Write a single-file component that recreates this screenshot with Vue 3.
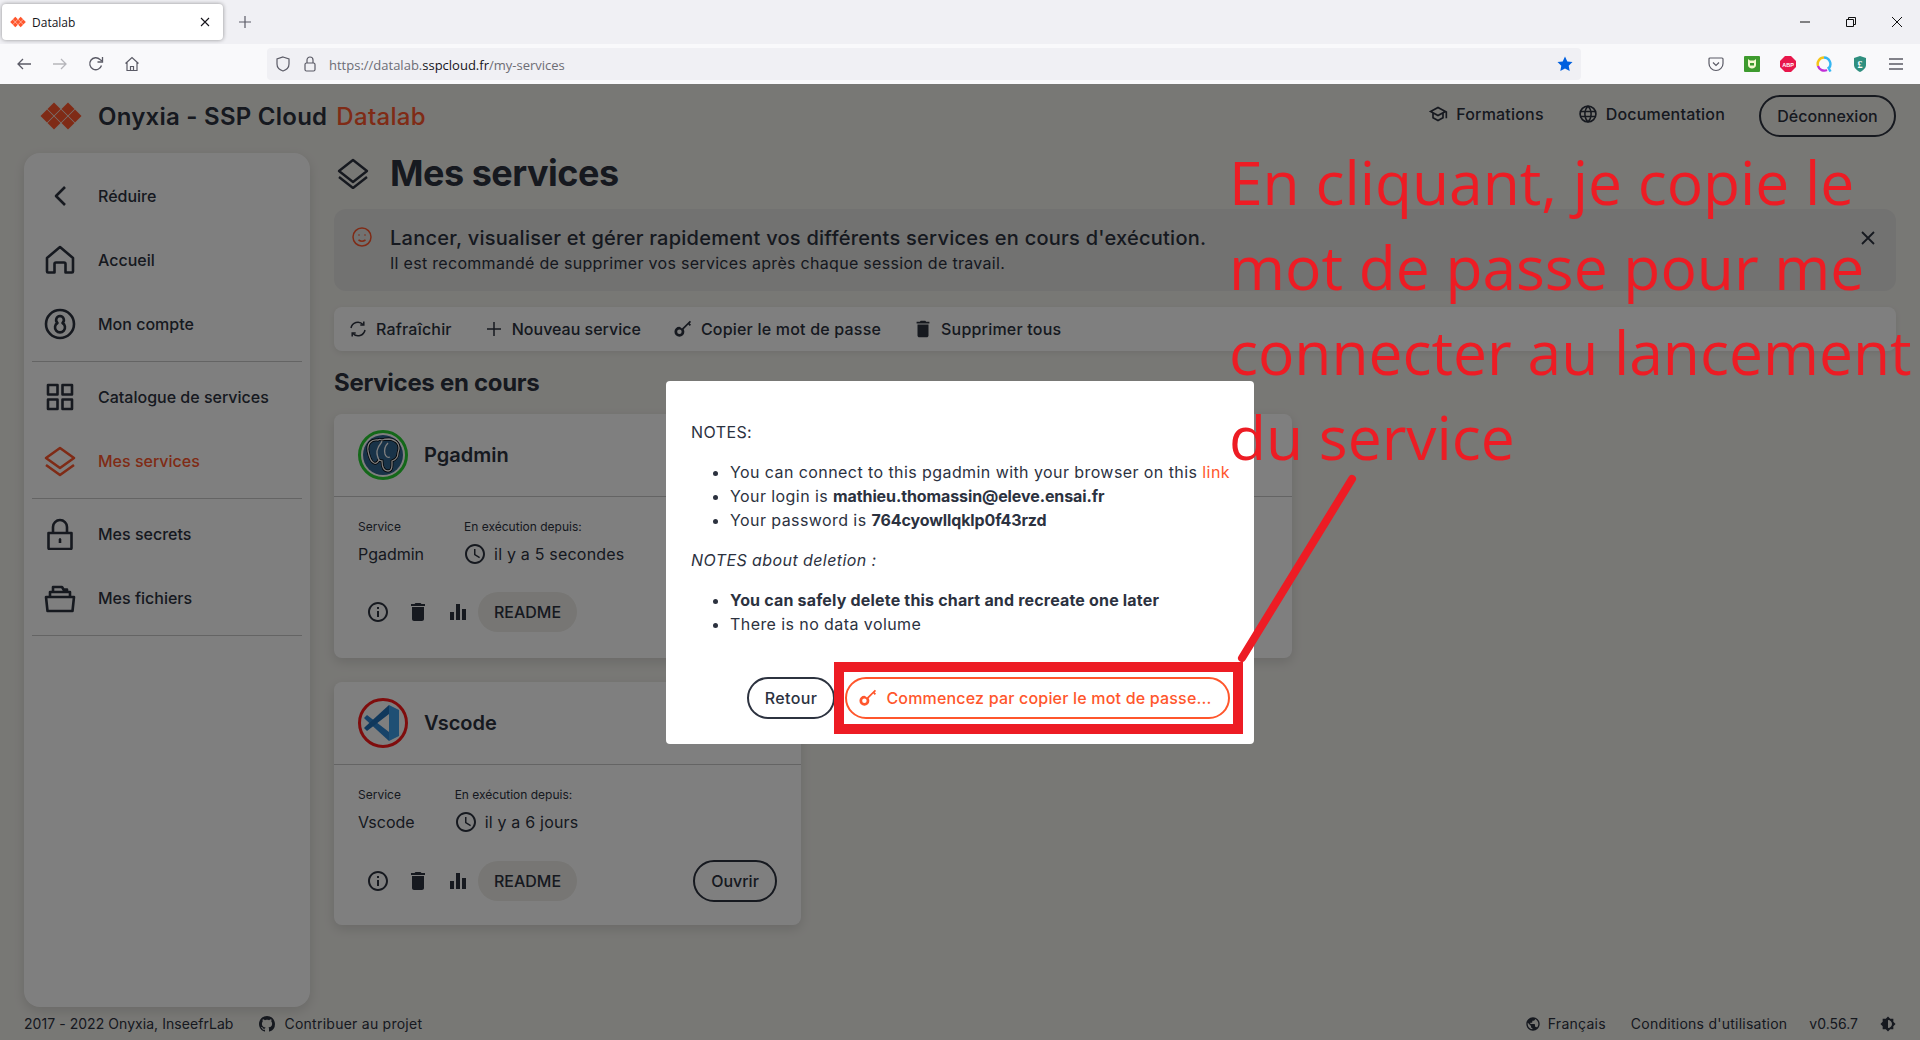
<template>
  <div class="app">
    <!-- Browser chrome -->
    <div class="tabstrip">
      <div class="tab">
        <svg class="logo-small" viewBox="0 0 42 30"><path v-for="(d, i) in logoCells" :key="i" :d="d" fill="#ff562c" /></svg>
        <span class="tab-title">Datalab</span>
        <svg class="tab-close" viewBox="0 0 10 10"><path d="M1 1l8 8M9 1l-8 8" stroke="#15141a" stroke-width="1.1" /></svg>
      </div>
      <svg class="tab-new" viewBox="0 0 12 12"><path d="M6 0v12M0 6h12" stroke="#5b5b66" stroke-width="1.2" /></svg>
      <div class="win-controls">
        <svg viewBox="0 0 10 10"><path d="M0 5h10" stroke="#111" stroke-width="1" /></svg>
        <svg viewBox="0 0 10 10" fill="none"><path d="M.5 2.5h7v7h-7zM2.5 2.5v-2h7v7h-2" stroke="#111" stroke-width="1" /></svg>
        <svg viewBox="0 0 10 10"><path d="M0 0l10 10M10 0L0 10" stroke="#111" stroke-width="1" /></svg>
      </div>
    </div>
    <div class="toolbar">
      <div class="nav-buttons">
        <svg viewBox="0 0 16 16" fill="none" stroke="#5b5b66" stroke-width="1.3"><path d="M15 8H2M7 3L2 8l5 5" /></svg>
        <svg viewBox="0 0 16 16" fill="none" stroke="#b6b6bb" stroke-width="1.3"><path d="M1 8h13M9 3l5 5-5 5" /></svg>
        <svg viewBox="0 0 16 16" fill="none" stroke="#5b5b66" stroke-width="1.3"><path d="M13.5 9.5A6 6 0 1 1 12 3.5L14 5" /><path d="M14.5 1v5h-5" /></svg>
        <svg viewBox="0 0 16 16" fill="none" stroke="#5b5b66" stroke-width="1.2"><path d="M1.5 7.5L8 1.5l6.5 6M3 6.5V14.5h10V6.5M6.5 14.5v-4h3v4" /></svg>
      </div>
      <div class="urlbar">
        <svg class="url-icon" viewBox="0 0 16 16" fill="none" stroke="#5b5b66" stroke-width="1.2"><path d="M8 1l6 2v5c0 3.5-3 6-6 7-3-1-6-3.500-6-7V3z" /></svg>
        <svg class="url-icon" viewBox="0 0 16 16" fill="none" stroke="#5b5b66" stroke-width="1.2"><rect x="3" y="7" width="10" height="8" rx="1.500" /><path d="M5 7V4a3 3 0 0 1 6 0v3" /></svg>
        <span class="url"><span class="url-dim">https://datalab.</span>sspcloud.fr<span class="url-dim">/my-services</span></span>
        <svg class="url-star" viewBox="0 0 16 16"><path d="M8 .5l2.300 4.900 5.200.7-3.800 3.700 1 5.300L8 12.500l-4.700 2.600 1-5.300L.5 6.100l5.200-.7z" fill="#0060df" /></svg>
      </div>
      <div class="extensions">
        <svg viewBox="0 0 16 16" fill="none" stroke="#5b5b66" stroke-width="1.2"><path d="M2 2h12a1 1 0 0 1 1 1v4.500a7 7 0 0 1-14 0V3a1 1 0 0 1 1-1z" /><path d="M5 6.500l3 3 3-3" /></svg>
        <svg viewBox="0 0 16 16"><rect width="16" height="16" rx="1" fill="#3e9b2e" /><path d="M4 3l2 1.500h4L12 3v6c0 2-2 3.500-4 3.500S4 11 4 9z" fill="#f4f8d0" /><path d="M6 7h4v2.500H6z" fill="#3e9b2e" /></svg>
        <svg viewBox="0 0 16 16"><path d="M5 0h6l5 5v6l-5 5H5l-5-5V5z" fill="#e8174b" /><text x="8" y="10.600" class="abp">ABP</text></svg>
        <svg viewBox="0 0 16 16" fill="none" stroke-width="2.400"><path d="M8 1.500a6.500 6.500 0 0 1 5 10.500" stroke="#35b6f2" /><path d="M8 1.500a6.500 6.500 0 0 0-6 8.500" stroke="#f5c518" /><path d="M2 10a6.500 6.500 0 0 0 9 4" stroke="#c12fd6" /><path d="M12 11l2.500 4.500" stroke="#35b6f2" /></svg>
        <svg viewBox="0 0 16 16"><path d="M8 0l6 2v7c0 3-3 5.500-6 7-3-1.500-6-4-6-7V2z" fill="#2f8f7f" /><text x="8" y="11.500" class="shield-letter">£</text></svg>
        <svg viewBox="0 0 16 16" stroke="#5b5b66" stroke-width="1.300"><path d="M1 3h14M1 8h14M1 13h14" /></svg>
      </div>
    </div>

    <!-- Page -->
    <div class="page">
      <header class="header">
        <svg class="logo" viewBox="0 0 42 30"><path v-for="(d, i) in logoCells" :key="i" :d="d" fill="#ff562c" /></svg>
        <span class="brand">Onyxia - SSP Cloud</span>
        <span class="brand-accent">Datalab</span>
        <div class="header-links">
          <a class="header-link">
            <svg viewBox="0 0 24 24"><path fill="currentColor" d="M12 3 1 9l4 2.180v6L12 21l7-3.820v-6l2-1.090V17h2V9L12 3zm6.820 6L12 12.720 5.180 9 12 5.280 18.820 9zM17 15.990l-5 2.730-5-2.730v-3.720L12 15l5-2.730v3.720z" /></svg>
            Formations
          </a>
          <a class="header-link">
            <svg viewBox="0 0 24 24"><circle cx="12" cy="12" r="9.500" fill="none" stroke="currentColor" stroke-width="2" /><path d="M2.500 9h19M2.500 15h19M12 2.500c-5 5-5 14 0 19M12 2.500c5 5 5 14 0 19" fill="none" stroke="currentColor" stroke-width="1.800" /></svg>
            Documentation
          </a>
          <button class="btn-outline logout">Déconnexion</button>
        </div>
      </header>

      <div class="body">
        <nav class="sidebar">
          <template v-for="(group, g) in navGroups" :key="g">
            <div v-for="item in group" :key="item.label" class="nav-item" :class="{ active: item.active }">
              <svg class="nav-icon" viewBox="0 0 32 32" fill="none" stroke="currentColor" stroke-width="2.600" stroke-linejoin="round">
                <path v-for="(d, i) in item.paths" :key="i" :d="d" />
              </svg>
              <span>{{ item.label }}</span>
            </div>
            <div class="nav-divider"></div>
          </template>
        </nav>

        <main class="main">
          <div class="title-row">
            <svg class="title-icon" viewBox="0 0 32 32" fill="none" stroke="currentColor" stroke-width="2.400" stroke-linejoin="round"><path d="M16 3L30 14 16 25 2 14z" /><path d="M2 20l14 11 14-11" /></svg>
            <h1>Mes services</h1>
          </div>

          <div class="banner">
            <svg class="banner-icon" viewBox="0 0 20 20" fill="none" stroke="#ff562c" stroke-width="1.500"><circle cx="10" cy="10" r="9" /><circle cx="7" cy="8" r=".8" fill="#ff562c" stroke="none" /><circle cx="13" cy="8" r=".8" fill="#ff562c" stroke="none" /><path d="M6.500 13c2 1.300 5 1.300 7 0" /></svg>
            <div class="banner-text">
              <div class="banner-title">Lancer, visualiser et gérer rapidement vos différents services en cours d'exécution.</div>
              <div class="banner-sub">Il est recommandé de supprimer vos services après chaque session de travail.</div>
            </div>
            <svg class="banner-close" viewBox="0 0 14 14"><path d="M1 1l12 12M13 1L1 13" stroke="currentColor" stroke-width="1.800" /></svg>
          </div>

          <div class="actions-bar">
            <div class="action">
              <svg viewBox="0 0 18 18" fill="none" stroke="currentColor" stroke-width="1.500"><path d="M2 8a7 7 0 0 1 12-3.500M16 10a7 7 0 0 1-12 3.500" /><path d="M14.800 1.500v3.500h-3.500M3.200 16.500V13h3.500" /></svg>
              Rafraîchir
            </div>
            <div class="action tight">
              <svg viewBox="0 0 18 18"><path d="M9 2v14M2 9h14" stroke="currentColor" stroke-width="1.500" /></svg>
              Nouveau service
            </div>
            <div class="action">
              <svg viewBox="3 2 20 20"><path fill="currentColor" :d="keyPath" /></svg>
              Copier le mot de passe
            </div>
            <div class="action trash">
              <svg viewBox="0 0 24 24"><path fill="currentColor" :d="trashPath" /></svg>
              Supprimer tous
            </div>
          </div>

          <h2 class="section-title">Services en cours</h2>

          <div class="cards">
            <article v-for="s in services" :key="s.name" class="card" :class="s.cls">
              <div class="card-head">
                <div class="card-logo" :class="s.ring">
                  <svg v-if="s.name === 'Pgadmin'" viewBox="0 0 44 44">
                    <circle cx="22" cy="22" r="20" fill="#336791" />
                    <g transform="translate(-3 -3)">
                      <path d="M20 10C13 9 9 14 10 21c1 5 3 11 6 12 2 1 4-1 5-3 1 0 2 1 3 1 0 5 1 10 6 10 3 0 4-3 4-6v-4c3-1 6-4 6-8 3-8-1-13-9-14-3 0-5 0-7 1-2-1-3-1-4 0z" fill="#336791" stroke="#000" stroke-width="2.800" />
                      <path d="M20 10C13 9 9 14 10 21c1 5 3 11 6 12 2 1 4-1 5-3 1 0 2 1 3 1 0 5 1 10 6 10 3 0 4-3 4-6v-4c3-1 6-4 6-8 3-8-1-13-9-14-3 0-5 0-7 1-2-1-3-1-4 0z" fill="none" stroke="#fff" stroke-width="1.300" />
                      <path d="M21 30c-2-4-3-8-1-12 1-3 3-4 4-7M32 27c-2 1-4 0-5-3-1-4 0-8 3-11" fill="none" stroke="#fff" stroke-width="1.300" />
                    </g>
                  </svg>
                  <svg v-else viewBox="3 3 44 44">
                    <path d="M31 43L8 22l-2-2 3-3 22 17z" fill="#2f86d2" />
                    <path d="M31 7L8 28l-2 2 3 3 22-17z" fill="#2070b8" />
                    <path d="M31 7l10 5v26l-10 5z" fill="#3f9fe8" />
                  </svg>
                </div>
                <span class="card-name">{{ s.name }}</span>
              </div>
              <div class="card-body">
                <div class="meta">
                  <div>
                    <div class="meta-label">Service</div>
                    <div class="meta-value">{{ s.name }}</div>
                  </div>
                  <div>
                    <div class="meta-label">En exécution depuis:</div>
                    <div class="meta-value time">
                      <svg viewBox="0 0 24 24"><path fill="currentColor" d="M11.990 2C6.470 2 2 6.480 2 12s4.470 10 9.990 10C17.520 22 22 17.520 22 12S17.520 2 11.990 2zM12 20c-4.420 0-8-3.580-8-8s3.580-8 8-8 8 3.580 8 8-3.580 8-8 8zm.5-13H11v6l5.250 3.150.75-1.230-4.500-2.670z" /></svg>
                      {{ s.since }}
                    </div>
                  </div>
                </div>
                <div class="card-actions">
                  <span class="icon-btn"><svg viewBox="0 0 24 24"><path fill="currentColor" d="M11 7h2v2h-2zm0 4h2v6h-2zm1-9C6.480 2 2 6.480 2 12s4.480 10 10 10 10-4.480 10-10S17.520 2 12 2zm0 18c-4.410 0-8-3.590-8-8s3.590-8 8-8 8 3.590 8 8-3.590 8-8 8z" /></svg></span>
                  <span class="icon-btn"><svg viewBox="0 0 24 24"><path fill="currentColor" :d="trashPath" /></svg></span>
                  <span class="icon-btn"><svg viewBox="0 0 24 24"><path fill="currentColor" d="M10 20h4V4h-4v16zm-6 0h4v-8H4v8zM16 9v11h4V9h-4z" /></svg></span>
                  <span class="chip">README</span>
                  <button v-if="s.cls === 'narrow'" class="btn-outline open">Ouvrir</button>
                </div>
              </div>
            </article>
          </div>
        </main>
      </div>

      <footer class="footer">
        <span class="copyright">2017 - 2022 Onyxia, InseefrLab</span>
        <span class="foot-link contribute">
          <svg viewBox="0 0 16 16"><path fill="currentColor" d="M8 0C3.580 0 0 3.580 0 8c0 3.540 2.290 6.530 5.470 7.590.4.070.55-.17.55-.38 0-.19-.01-.82-.01-1.490-2.010.37-2.530-.49-2.690-.94-.09-.23-.48-.94-.82-1.130-.28-.15-.68-.52-.01-.53.63-.01 1.080.58 1.230.82.72 1.210 1.870.87 2.330.66.070-.52.28-.87.51-1.070-1.780-.2-3.640-.89-3.640-3.950 0-.87.31-1.590.82-2.150-.08-.2-.36-1.020.08-2.120 0 0 .67-.21 2.200.82.64-.18 1.320-.27 2-.27.68 0 1.360.09 2 .27 1.530-1.040 2.200-.82 2.200-.82.44 1.100.16 1.920.08 2.120.51.56.82 1.270.82 2.150 0 3.070-1.870 3.750-3.650 3.950.29.25.54.73.54 1.480 0 1.070-.01 1.930-.01 2.200 0 .21.15.46.55.38A8.013 8.013 0 0 0 16 8c0-4.420-3.580-8-8-8z" /></svg>
          Contribuer au projet
        </span>
        <div class="footer-right">
          <span class="foot-link lang">
            <svg viewBox="0 0 24 24"><path fill="currentColor" d="M12 2C6.480 2 2 6.480 2 12s4.480 10 10 10 10-4.480 10-10S17.520 2 12 2zm-1 17.930c-3.950-.49-7-3.850-7-7.930 0-.62.08-1.210.21-1.790L9 15v1c0 1.100.9 2 2 2v1.930zm6.900-2.540c-.26-.81-1-1.390-1.900-1.390h-1v-3c0-.55-.45-1-1-1H8v-2h2c.55 0 1-.45 1-1V7h2c1.100 0 2-.9 2-2v-.41c2.930 1.190 5 4.060 5 7.410 0 2.080-.8 3.970-2.100 5.390z" /></svg>
            Français
          </span>
          <span>Conditions d'utilisation</span>
          <span class="version">v0.56.7</span>
          <svg class="theme-icon" viewBox="0 0 24 24"><path fill="currentColor" d="M20 8.690V4h-4.690L12 .69 8.690 4H4v4.690L.69 12 4 15.310V20h4.690L12 23.310 15.310 20H20v-4.690L23.310 12 20 8.690zM12 18V6c3.310 0 6 2.690 6 6s-2.690 6-6 6z" /></svg>
        </div>
      </footer>

      <!-- Dialog -->
      <div class="backdrop">
        <div class="dialog">
          <p>NOTES:</p>
          <ul>
            <li>You can connect to this pgadmin with your browser on this <a class="link">link</a></li>
            <li>Your login is <strong>mathieu.thomassin@eleve.ensai.fr</strong></li>
            <li>Your password is <strong>764cyowllqklp0f43rzd</strong></li>
          </ul>
          <p><em>NOTES about deletion :</em></p>
          <ul>
            <li><strong class="spaced">You can safely delete this chart and recreate one later</strong></li>
            <li>There is no data volume</li>
          </ul>
          <div class="dialog-actions">
            <button class="btn-outline back">Retour</button>
            <button class="btn-copy">
              <svg viewBox="3 2 20 20"><path fill="currentColor" :d="keyPath" /></svg>
              Commencez par copier le mot de passe...
            </button>
          </div>
        </div>
      </div>
    </div>

    <!-- Red annotation drawn over the capture -->
    <div class="note">
      <div>En cliquant, je copie le</div>
      <div>mot de passe pour me</div>
      <div>connecter au lancement</div>
      <div>du service</div>
    </div>
    <div class="note-box"></div>
    <svg class="note-line" viewBox="0 0 1920 1040"><path d="M1352 479L1242 658" stroke="#ed1c24" stroke-width="8" stroke-linecap="round" /></svg>
  </div>
</template>

<script setup>
const diamond = (x, y) => `M${x} ${y - 6.5}L${x + 6.5} ${y}L${x} ${y + 6.5}L${x - 6.5} ${y}Z`
const logoCells = [
  diamond(14, 8), diamond(28, 8),
  diamond(7, 15), diamond(21, 15), diamond(35, 15),
  diamond(14, 22), diamond(28, 22)
]

const keyPath = 'M9 9.500a5.500 5.500 0 1 0 5.500 5.500c0-1-.3-1.900-.7-2.700L19 7.100l1.500 1.500 1.400-1.400-1.500-1.500 1.600-1.600-1.400-1.400-8.800 8.800A5.400 5.400 0 0 0 9 9.500zm0 3a2.500 2.500 0 1 1 0 5 2.500 2.500 0 0 1 0-5z'
const trashPath = 'M6 19c0 1.100.9 2 2 2h8c1.100 0 2-.9 2-2V7H6v12zM19 4h-3.500l-1-1h-5l-1 1H5v2h14V4z'

const navGroups = [
  [
    { label: 'Réduire', paths: ['M21 7l-9 9 9 9'] },
    { label: 'Accueil', paths: ['M16 3L3 14v13.500a1 1 0 0 0 1 1h6.500V20a1.500 1.500 0 0 1 1.500-1.500h8a1.500 1.500 0 0 1 1.500 1.500v8.500H28a1 1 0 0 0 1-1V14z'] },
    { label: 'Mon compte', paths: ['M16 2a14 14 0 1 0 0 28 14 14 0 0 0 0-28z', 'M16 8a4 4 0 0 0-2.500 7 5 5 0 1 0 5 0A4 4 0 0 0 16 8z'] }
  ],
  [
    { label: 'Catalogue de services', paths: ['M4 4h9.500v9.500H4zM18.500 4H28v9.500h-9.500zM4 18.500h9.500V28H4zM18.500 18.500H28V28h-9.500z'] },
    { label: 'Mes services', active: true, paths: ['M16 3L30 13 16 23 2 13z', 'M2 20l14 10 14-10'] }
  ],
  [
    { label: 'Mes secrets', paths: ['M4.500 15h23v15a1 1 0 0 1-1 1h-21a1 1 0 0 1-1-1zM9 15V9a7 7 0 0 1 14 0v6', 'M16 21v4M15 21.500h2'] },
    { label: 'Mes fichiers', paths: ['M2 15h28l-1.500 14h-25zM6 15v-5h20v5M9 10V5h9l1.500 2.500H23V10'] }
  ]
]

const services = [
  { name: 'Pgadmin', since: 'il y a 5 secondes', ring: 'ring-green', cls: 'wide' },
  { name: 'Vscode', since: 'il y a 6 jours', ring: 'ring-red', cls: 'narrow' }
]
</script>

<style>
html, body {
  margin: 0;
  padding: 0;
  overflow: hidden;
}
</style>

<style scoped>
.app {
  position: relative;
  width: 1920px;
  height: 1040px;
  overflow: hidden;
  display: flex;
  flex-direction: column;
  font-family: Inter, "Noto Sans", sans-serif;
  color: #2c323f;
}

/* Browser chrome */
.tabstrip {
  height: 44px;
  background: #f0f0f4;
  display: flex;
  align-items: center;
  font-family: "Open Sans", sans-serif;
}

.tab {
  width: 221px;
  height: 36px;
  margin-left: 2px;
  box-sizing: border-box;
  padding: 0 10px 0 8px;
  background: #fff;
  border-radius: 4px;
  box-shadow: 0 0 4px rgba(0, 0, 0, 0.4);
  display: flex;
  align-items: center;
}

.logo-small {
  width: 16px;
  height: 12px;
}

.tab-title {
  margin-left: 6px;
  font-size: 12px;
  color: #15141a;
  flex: 1;
}

.tab-close {
  width: 10px;
  height: 10px;
  margin-right: 3px;
}

.tab-new {
  width: 12px;
  height: 12px;
  margin-left: 16px;
}

.win-controls {
  margin-left: auto;
  margin-right: 18px;
  display: flex;
  gap: 36px;
}

.win-controls svg {
  width: 10px;
  height: 10px;
}

.toolbar {
  height: 40px;
  background: #f9f9fb;
  display: flex;
  align-items: center;
  font-family: "Open Sans", sans-serif;
}

.nav-buttons {
  width: 267px;
  box-sizing: border-box;
  padding-left: 16px;
  display: flex;
  gap: 20px;
}

.nav-buttons svg {
  width: 16px;
  height: 16px;
}

.urlbar {
  width: 1314px;
  height: 32px;
  box-sizing: border-box;
  padding: 0 8px 0 8px;
  background: #f0f0f4;
  border-radius: 4px;
  display: flex;
  align-items: center;
  gap: 11px;
}

.url-icon {
  width: 16px;
  height: 16px;
}

.url {
  font-size: 13px;
  color: #15141a;
  flex: 1;
  padding-top: 2px;
}

.url-dim {
  color: #6d6d75;
}

.url-star {
  width: 16px;
  height: 16px;
}

.extensions {
  margin-left: 127px;
  display: flex;
  gap: 20px;
}

.extensions svg {
  width: 16px;
  height: 16px;
}

.abp {
  font: 700 5.500px "Liberation Sans", sans-serif;
  fill: #fff;
  text-anchor: middle;
}

.shield-letter {
  font: 700 10px "Liberation Serif", serif;
  fill: #fff;
  text-anchor: middle;
}

/* Page */
.page {
  position: relative;
  flex: 1;
  min-height: 0;
  background: #f1f0eb;
  display: flex;
  flex-direction: column;
}

.header {
  height: 69px;
  box-sizing: border-box;
  padding: 0 24px 5px 40px;
  display: flex;
  align-items: center;
}

.logo {
  width: 42px;
  height: 30px;
}

.brand {
  margin-left: 16px;
  font-size: 24px;
  font-weight: 600;
  letter-spacing: 0.25px;
}

.brand-accent {
  margin-left: 9px;
  font-size: 24px;
  font-weight: 500;
  letter-spacing: 0.3px;
  color: #ff562c;
}

.header-links {
  margin-left: auto;
  display: flex;
  align-items: center;
}

.header-link {
  display: flex;
  align-items: center;
  gap: 8px;
  font-size: 16px;
  font-weight: 500;
  letter-spacing: 0.2px;
  margin-right: 34px;
  margin-top: -4px;
}

.header-link svg {
  width: 20px;
  height: 20px;
}

.btn-outline {
  font-family: inherit;
  font-size: 16px;
  font-weight: 500;
  color: #2c323f;
  background: transparent;
  border: 2px solid #2c323f;
  border-radius: 21px;
  height: 42px;
  box-sizing: border-box;
  padding: 0;
  cursor: pointer;
}

.logout {
  width: 137px;
}

.body {
  flex: 1;
  min-height: 0;
  display: flex;
}

.sidebar {
  width: 286px;
  margin-left: 24px;
  box-sizing: border-box;
  padding: 11px 8px 0;
  background: #fff;
  border-radius: 16px;
  box-shadow: 0 4px 12px rgba(0, 0, 0, 0.12);
  flex-shrink: 0;
}

.nav-item {
  height: 64px;
  box-sizing: border-box;
  padding-left: 12px;
  display: flex;
  align-items: center;
  gap: 22px;
  font-size: 16px;
  font-weight: 500;
}

.nav-item.active {
  color: #ff562c;
}

.nav-icon {
  width: 32px;
  height: 32px;
  flex-shrink: 0;
}

.nav-divider {
  height: 1px;
  margin: 5px 0 3px;
  background: #c9c9c9;
}

.main {
  flex: 1;
  min-width: 0;
  margin: 0 24px 0 24px;
}

.title-row {
  height: 40px;
  display: flex;
  align-items: center;
}

.title-icon {
  width: 32px;
  height: 32px;
  margin-left: 3px;
}

h1 {
  margin: 0 0 0 21px;
  font-size: 36px;
  font-weight: 700;
  letter-spacing: -0.5px;
}

.banner {
  margin-top: 16px;
  height: 82px;
  box-sizing: border-box;
  padding: 0 21px 0 18px;
  background: #e4e4e2;
  border-radius: 12px;
  display: flex;
  align-items: flex-start;
}

.banner-icon {
  width: 20px;
  height: 20px;
  margin-top: 18px;
}

.banner-text {
  margin-left: 18px;
  margin-top: 17px;
  flex: 1;
}

.banner-title {
  font-size: 20px;
  font-weight: 500;
  line-height: 24px;
  letter-spacing: 0.25px;
}

.banner-sub {
  font-size: 16px;
  line-height: 20px;
  margin-top: 3px;
  letter-spacing: 0.3px;
}

.banner-close {
  width: 14px;
  height: 14px;
  margin-top: 22px;
}

.actions-bar {
  margin-top: 16px;
  height: 44px;
  box-sizing: border-box;
  padding-left: 15px;
  background: #fff;
  border-radius: 8px;
  display: flex;
  align-items: center;
  gap: 33px;
  box-shadow: 0 2px 6px rgba(0, 0, 0, 0.08);
}

.action {
  display: flex;
  align-items: center;
  gap: 9px;
  font-size: 16px;
  font-weight: 500;
  letter-spacing: 0.2px;
}

.action.tight {
  letter-spacing: 0;
}

.action svg {
  width: 18px;
  height: 18px;
}

.action.trash svg {
  width: 22px;
  height: 22px;
  margin: 0 -2px;
}

.section-title {
  margin: 17px 0 16px;
  font-size: 24px;
  line-height: 30px;
  font-weight: 700;
  letter-spacing: -0.3px;
}

.cards {
  display: flex;
  flex-direction: column;
  gap: 24px;
}

.card {
  background: #fff;
  border-radius: 8px;
  box-shadow: 0 4px 12px rgba(0, 0, 0, 0.12);
}

.card.wide {
  width: 958px;
  height: 244px;
}

.card.narrow {
  width: 467px;
  height: 243px;
}

.card-head {
  height: 83px;
  box-sizing: border-box;
  padding-left: 24px;
  border-bottom: 1px solid #c9c9c9;
  display: flex;
  align-items: center;
  gap: 16px;
}

.card-logo {
  width: 50px;
  height: 50px;
  box-sizing: border-box;
  border-radius: 50%;
  border: 3px solid;
  overflow: hidden;
}

.card-logo svg {
  display: block;
  width: 100%;
  height: 100%;
}

.ring-green {
  border-color: #28d032;
}

.ring-red {
  border-color: #ff1a1a;
}

.card-name {
  font-size: 20px;
  font-weight: 600;
}

.card-body {
  padding: 22px 24px 0;
}

.meta {
  display: flex;
  gap: 40px;
}

.meta-label {
  font-size: 12px;
  line-height: 16px;
}

.meta-value {
  margin-top: 7px;
  font-size: 16px;
  line-height: 24px;
}

.meta-value.time {
  display: flex;
  align-items: center;
  gap: 7px;
  letter-spacing: 0.2px;
}

.meta-value svg {
  width: 24px;
  height: 24px;
  margin-left: -1px;
}

.card-actions {
  margin-top: 26px;
  display: flex;
  align-items: center;
}

.icon-btn {
  width: 40px;
  height: 40px;
  display: flex;
  align-items: center;
  justify-content: center;
}

.icon-btn svg {
  width: 24px;
  height: 24px;
}

.chip {
  width: 99px;
  height: 40px;
  border-radius: 20px;
  background: #eeede8;
  font-size: 16px;
  font-weight: 500;
  display: flex;
  align-items: center;
  justify-content: center;
}

.open {
  margin-left: auto;
  width: 84px;
}

.footer {
  height: 33px;
  box-sizing: border-box;
  padding: 0 24px;
  display: flex;
  align-items: center;
  font-size: 14px;
  letter-spacing: 0.25px;
}

.copyright {
  letter-spacing: 0.05px;
}

.foot-link {
  display: flex;
  align-items: center;
  gap: 7px;
  margin-left: 26px;
}

.foot-link.contribute {
  gap: 9px;
}

.foot-link svg {
  width: 16px;
  height: 16px;
}

.footer-right {
  margin-left: auto;
  display: flex;
  align-items: center;
  gap: 22px;
}

.version {
  letter-spacing: 0;
}

.lang {
  margin-left: 0;
  margin-right: 3px;
}

.theme-icon {
  width: 16px;
  height: 16px;
}

.backdrop {
  position: absolute;
  inset: 0;
  background: rgba(0, 0, 0, 0.5);
  display: flex;
  align-items: center;
  justify-content: center;
}

.dialog {
  width: 588px;
  height: 363px;
  box-sizing: border-box;
  padding: 39px 24px 0 25px;
  background: #fff;
  border-radius: 4px;
  font-size: 16px;
  line-height: 24px;
  letter-spacing: 0.42px;
}

.dialog p {
  margin: 0;
}

.dialog ul {
  margin: 16px 0;
  padding-left: 39px;
}

.link {
  color: #ff562c;
}

.dialog strong {
  font-weight: 700;
  letter-spacing: -0.1px;
}

.dialog strong.spaced {
  letter-spacing: 0.18px;
}

.dialog-actions {
  margin-top: 41px;
  display: flex;
  justify-content: flex-end;
  gap: 10px;
}

.back {
  width: 88px;
  letter-spacing: 0.4px;
}

.btn-copy {
  width: 385px;
  height: 42px;
  box-sizing: border-box;
  font-family: inherit;
  font-size: 16px;
  font-weight: 500;
  letter-spacing: 0.19px;
  color: #ff562c;
  background: #fff;
  border: 2px solid #ff562c;
  border-radius: 21px;
  display: flex;
  align-items: center;
  justify-content: center;
  gap: 9px;
  padding: 0 4px 0 0;
}

.btn-copy svg {
  width: 18px;
  height: 18px;
}

/* Annotation */
.note {
  position: absolute;
  left: 1229px;
  top: 139px;
  font-family: "Open Sans", sans-serif;
  font-size: 60.500px;
  line-height: 85px;
  color: #ed1c24;
  white-space: nowrap;
}

.note-box {
  position: absolute;
  left: 834px;
  top: 662px;
  width: 409px;
  height: 72px;
  box-sizing: border-box;
  border: 10px solid #ed1c24;
}

.note-line {
  position: absolute;
  inset: 0;
  width: 1920px;
  height: 1040px;
  pointer-events: none;
}
</style>
